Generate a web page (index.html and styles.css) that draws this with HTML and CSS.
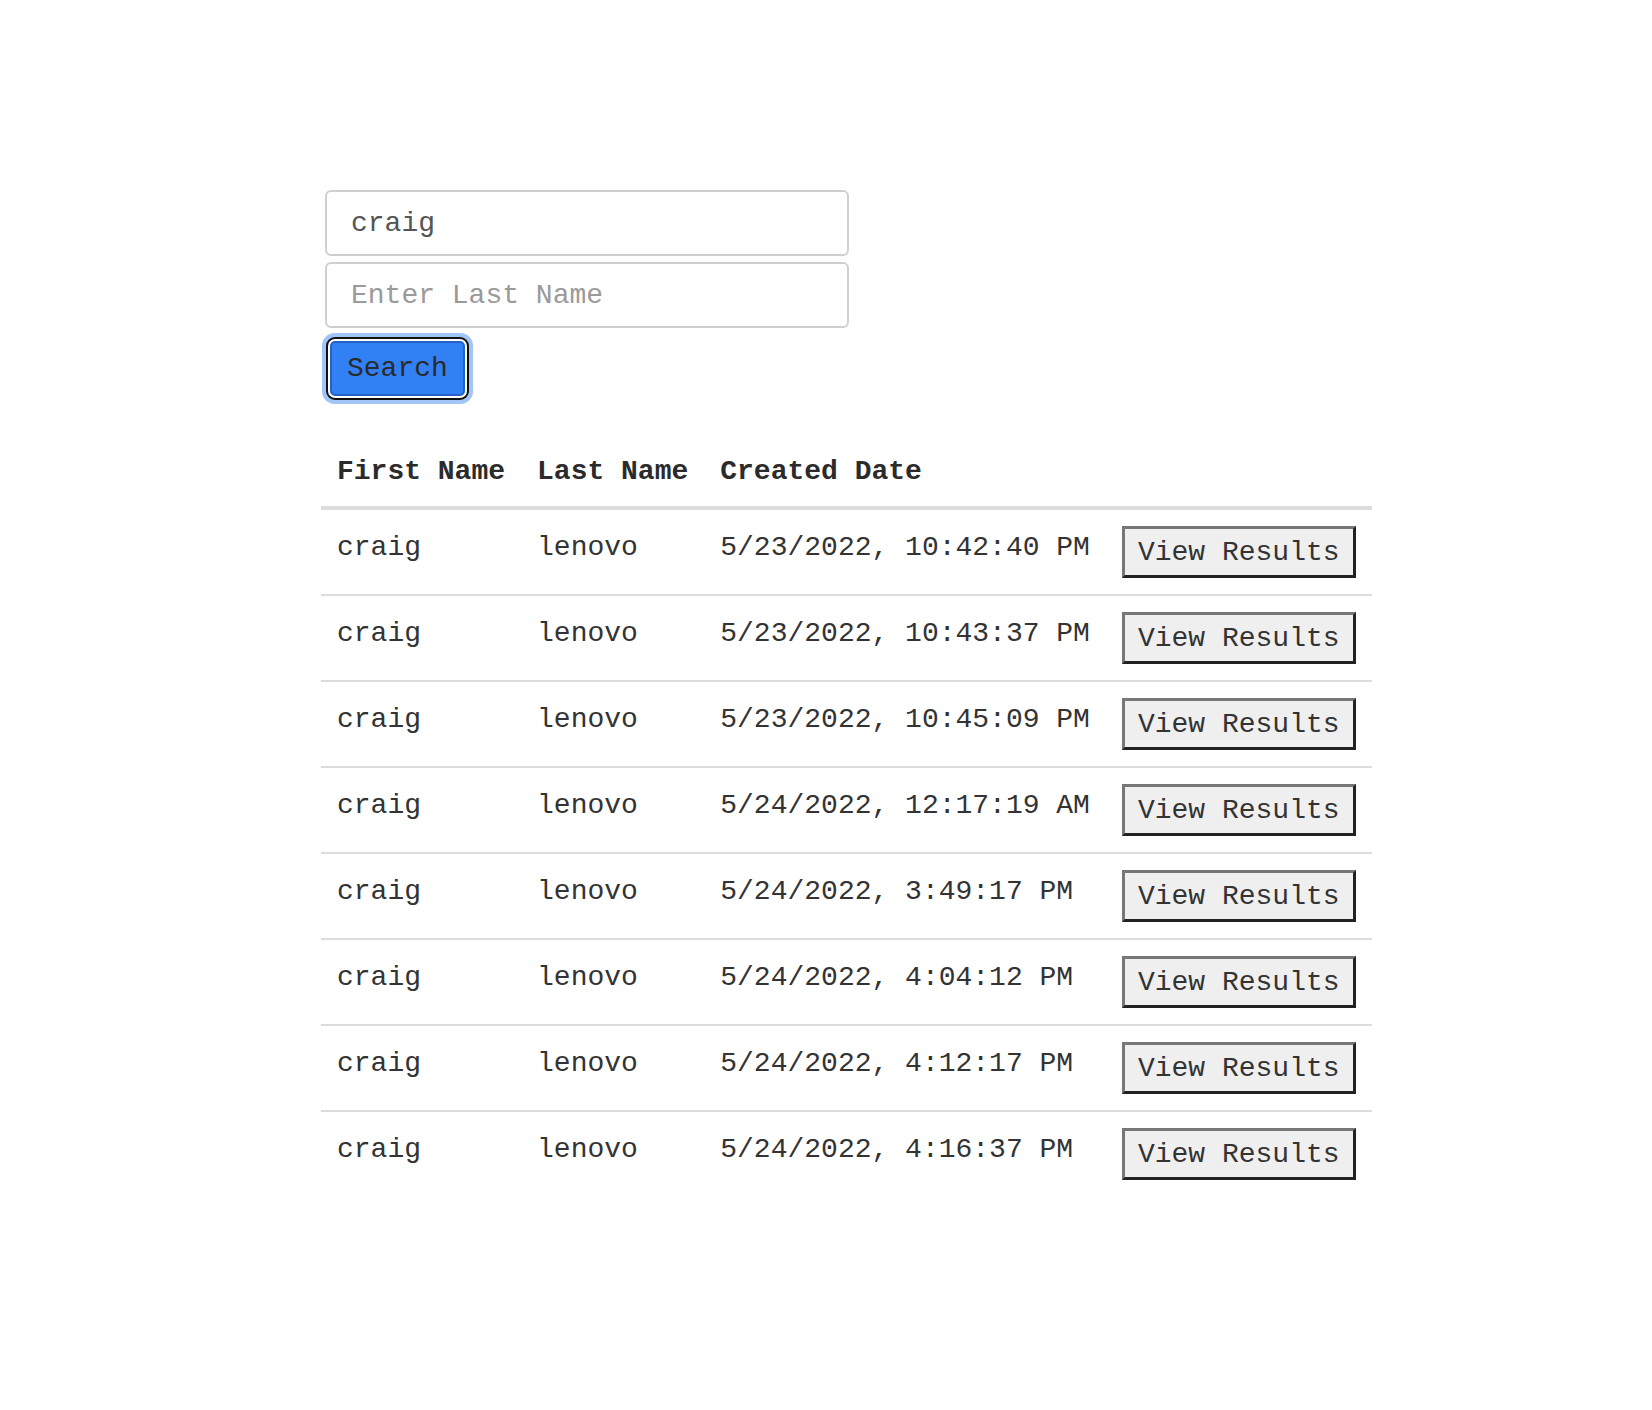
FILE: index.html
```html
<!DOCTYPE html>
<html lang="en">
<head>
<meta charset="utf-8">
<title>Search</title>
<link rel="stylesheet" href="styles.css">
</head>
<body>
<main class="page">
  <form class="search-form">
    <input class="field" type="text" value="craig">
    <input class="field" type="text" placeholder="Enter Last Name">
    <div class="actions"><button type="button" class="search-btn">Search</button></div>
  </form>
  <table class="results">
    <thead>
      <tr><th>First Name</th><th>Last Name</th><th>Created Date</th><th></th></tr>
    </thead>
    <tbody>
      <tr><td>craig</td><td>lenovo</td><td>5/23/2022, 10:42:40 PM</td><td class="act"><button type="button" class="view-btn">View Results</button></td></tr>
      <tr><td>craig</td><td>lenovo</td><td>5/23/2022, 10:43:37 PM</td><td class="act"><button type="button" class="view-btn">View Results</button></td></tr>
      <tr><td>craig</td><td>lenovo</td><td>5/23/2022, 10:45:09 PM</td><td class="act"><button type="button" class="view-btn">View Results</button></td></tr>
      <tr><td>craig</td><td>lenovo</td><td>5/24/2022, 12:17:19 AM</td><td class="act"><button type="button" class="view-btn">View Results</button></td></tr>
      <tr><td>craig</td><td>lenovo</td><td>5/24/2022, 3:49:17 PM</td><td class="act"><button type="button" class="view-btn">View Results</button></td></tr>
      <tr><td>craig</td><td>lenovo</td><td>5/24/2022, 4:04:12 PM</td><td class="act"><button type="button" class="view-btn">View Results</button></td></tr>
      <tr><td>craig</td><td>lenovo</td><td>5/24/2022, 4:12:17 PM</td><td class="act"><button type="button" class="view-btn">View Results</button></td></tr>
      <tr><td>craig</td><td>lenovo</td><td>5/24/2022, 4:16:37 PM</td><td class="act"><button type="button" class="view-btn">View Results</button></td></tr>
    </tbody>
  </table>
</main>
</body>
</html>
```

FILE: styles.css
```css
html, body {
  margin: 0;
  padding: 0;
  background: #fff;
}

body {
  font-family: "Courier New", "Liberation Mono", monospace;
  font-size: 28px;
  color: #333;
}

.page {
  padding: 190px 0 0 321px;
}

.search-form {
  display: flex;
  flex-direction: column;
  gap: 6px;
  margin-left: 4px;
  width: 524px;
}

.field {
  box-sizing: border-box;
  width: 524px;
  height: 66px;
  margin: 0;
  padding: 0 24px;
  border: 2px solid #cfcfcf;
  border-radius: 6px;
  font-family: inherit;
  font-size: 28px;
  color: #555;
  background: #fff;
  outline: none;
}

.field::placeholder {
  color: #9a9a9a;
}

.actions {
  padding-top: 7px;
  padding-left: 5px;
}

.search-btn {
  margin: 0;
  padding: 10px 15px;
  border: 2px solid #2462c9;
  border-radius: 5px;
  background: #3181f4;
  color: #2a2a2a;
  font-family: inherit;
  font-size: 28px;
  line-height: normal;
  box-shadow: 0 0 0 2px #fff, 0 0 0 4px #111, 0 0 0 8px #a2c5f9;
}

.results {
  border-collapse: collapse;
  margin-top: 44px;
}

.results th {
  text-align: left;
  font-weight: bold;
  padding: 16px 16px 19px;
  border-bottom: 4px solid #dcdcdc;
  color: #2b2b2b;
}

.results td {
  vertical-align: top;
  padding: 22px 16px 0;
  border-bottom: 2px solid #dcdcdc;
  white-space: nowrap;
}

.results tbody tr:last-child td {
  border-bottom: none;
}

.results td.act {
  padding: 16px;
}

.view-btn {
  display: block;
  box-sizing: border-box;
  height: 52px;
  margin: 0;
  padding: 0 13px;
  border-style: solid;
  border-width: 3px;
  border-color: #777 #222 #222 #777;
  border-radius: 0;
  background: #efefef;
  color: #333;
  font-family: inherit;
  font-size: 28px;
  line-height: normal;
}
```
